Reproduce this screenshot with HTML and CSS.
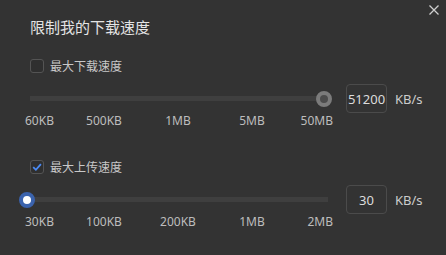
FILE: index.html
```html
<!DOCTYPE html>
<html lang="zh-CN">
<head>
  <meta charset="UTF-8" />
  <meta name="viewport" content="width=device-width, initial-scale=1" />
  <title>限制我的下载速度</title>
  <link rel="stylesheet" href="styles.css">
</head>
<body>

  <div class="dialog">
    <div class="header">
      <h2>限制我的下载速度</h2>
      <button class="close" type="button">
        <svg width="10" height="10" viewBox="0 0 10 10">
          <path d="M0.5 0.5 L9.5 9.5 M9.5 0.5 L0.5 9.5" stroke="#cfcfcf" stroke-width="1.3" fill="none" />
        </svg>
      </button>
    </div>

    <!-- 下载 -->
    <div class="section">
      <label class="check-row">
        <span class="checkbox"></span>
        <span>最大下载速度</span>
      </label>
      <div class="slider-row">
        <div class="slider">
          <div class="track"></div>
          <div class="rail">
            <span class="thumb" style="left:100%"></span>
          </div>
        </div>
        <div class="value-box">51200</div>
        <span class="unit">KB/s</span>
      </div>
      <div class="ticks">
        <span>60KB</span>
        <span>500KB</span>
        <span>1MB</span>
        <span>5MB</span>
        <span>50MB</span>
      </div>
    </div>

    <!-- 上传 -->
    <div class="section upload">
      <label class="check-row">
        <span class="checkbox checked">
          <svg width="12" height="12" viewBox="0 0 12 12">
            <path d="M2.2 6.2 L4.9 8.8 L9.9 3.2" stroke="#4b8bf5" stroke-width="1.8" fill="none" />
          </svg>
        </span>
        <span>最大上传速度</span>
      </label>
      <div class="slider-row">
        <div class="slider">
          <div class="track"></div>
          <div class="rail">
            <span class="thumb active" style="left:0%"></span>
          </div>
        </div>
        <div class="value-box">30</div>
        <span class="unit">KB/s</span>
      </div>
      <div class="ticks">
        <span>30KB</span>
        <span>100KB</span>
        <span>200KB</span>
        <span>1MB</span>
        <span>2MB</span>
      </div>
    </div>
  </div>

</body>
</html>
```

FILE: styles.css
```css
body {
  margin: 0;
  background-color: #333333;
  font-family: "Noto Sans", "Noto Sans CJK SC", sans-serif;
  color: #c8c8c8;
}

.dialog {
  width: 446px;
  height: 255px;
  padding-left: 30px;
  box-sizing: border-box;
}

.header {
  display: flex;
  justify-content: space-between;
  align-items: flex-start;
}

.header h2 {
  margin: 17px 0 0 0;
  font-size: 15px;
  line-height: 20px;
  font-weight: normal;
  color: #e4e4e4;
}

.close {
  background: none;
  border: none;
  padding: 0;
  margin: 5px 7px 0 0;
  width: 10px;
  height: 10px;
  cursor: pointer;
  display: flex;
}

.section {
  margin-top: 19px;
}

.section.upload {
  margin-top: 29px;
}

.check-row {
  display: flex;
  align-items: center;
  gap: 6px;
  height: 20px;
  font-size: 12px;
  color: #c8c8c8;
}

.checkbox {
  width: 12px;
  height: 12px;
  border: 1px solid #545454;
  border-radius: 3px;
  background-color: #2f2f2f;
  display: flex;
  align-items: center;
  justify-content: center;
  margin-top: -1px;
}

.slider-row {
  display: flex;
  align-items: center;
  margin-top: 8px;
  height: 29px;
}

.slider {
  position: relative;
  width: 298px;
  height: 29px;
  display: flex;
  align-items: center;
  margin-right: 18px;
}

.track {
  width: 100%;
  height: 5px;
  background-color: #3f3f3f;
}

.rail {
  position: absolute;
  left: -3px;
  right: 4px;
  top: 0;
  bottom: 0;
}

.thumb {
  position: absolute;
  top: 50%;
  width: 8px;
  height: 8px;
  border: 4px solid #7b7b7b;
  background-color: #4c4c4c;
  border-radius: 50%;
  transform: translate(-50%, -50%);
}

.thumb.active {
  border-color: #3b63ad;
  background-color: #ffffff;
}

.value-box {
  width: 39px;
  height: 27px;
  border: 1px solid #4b4b4b;
  border-radius: 4px;
  display: flex;
  align-items: center;
  justify-content: center;
  font-size: 13px;
  color: #dcdcdc;
}

.unit {
  margin-left: 8px;
  font-size: 13px;
  color: #cccccc;
}

.ticks {
  display: grid;
  grid-template-columns: 42px 74px 74px 74px 1fr;
  width: 308px;
  margin-left: -5px;
  font-size: 12px;
  line-height: 15px;
  color: #bdbdbd;
}

.ticks span {
  text-align: center;
}

.ticks span:first-child {
  text-align: left;
}

.ticks span:last-child {
  text-align: right;
}
```
